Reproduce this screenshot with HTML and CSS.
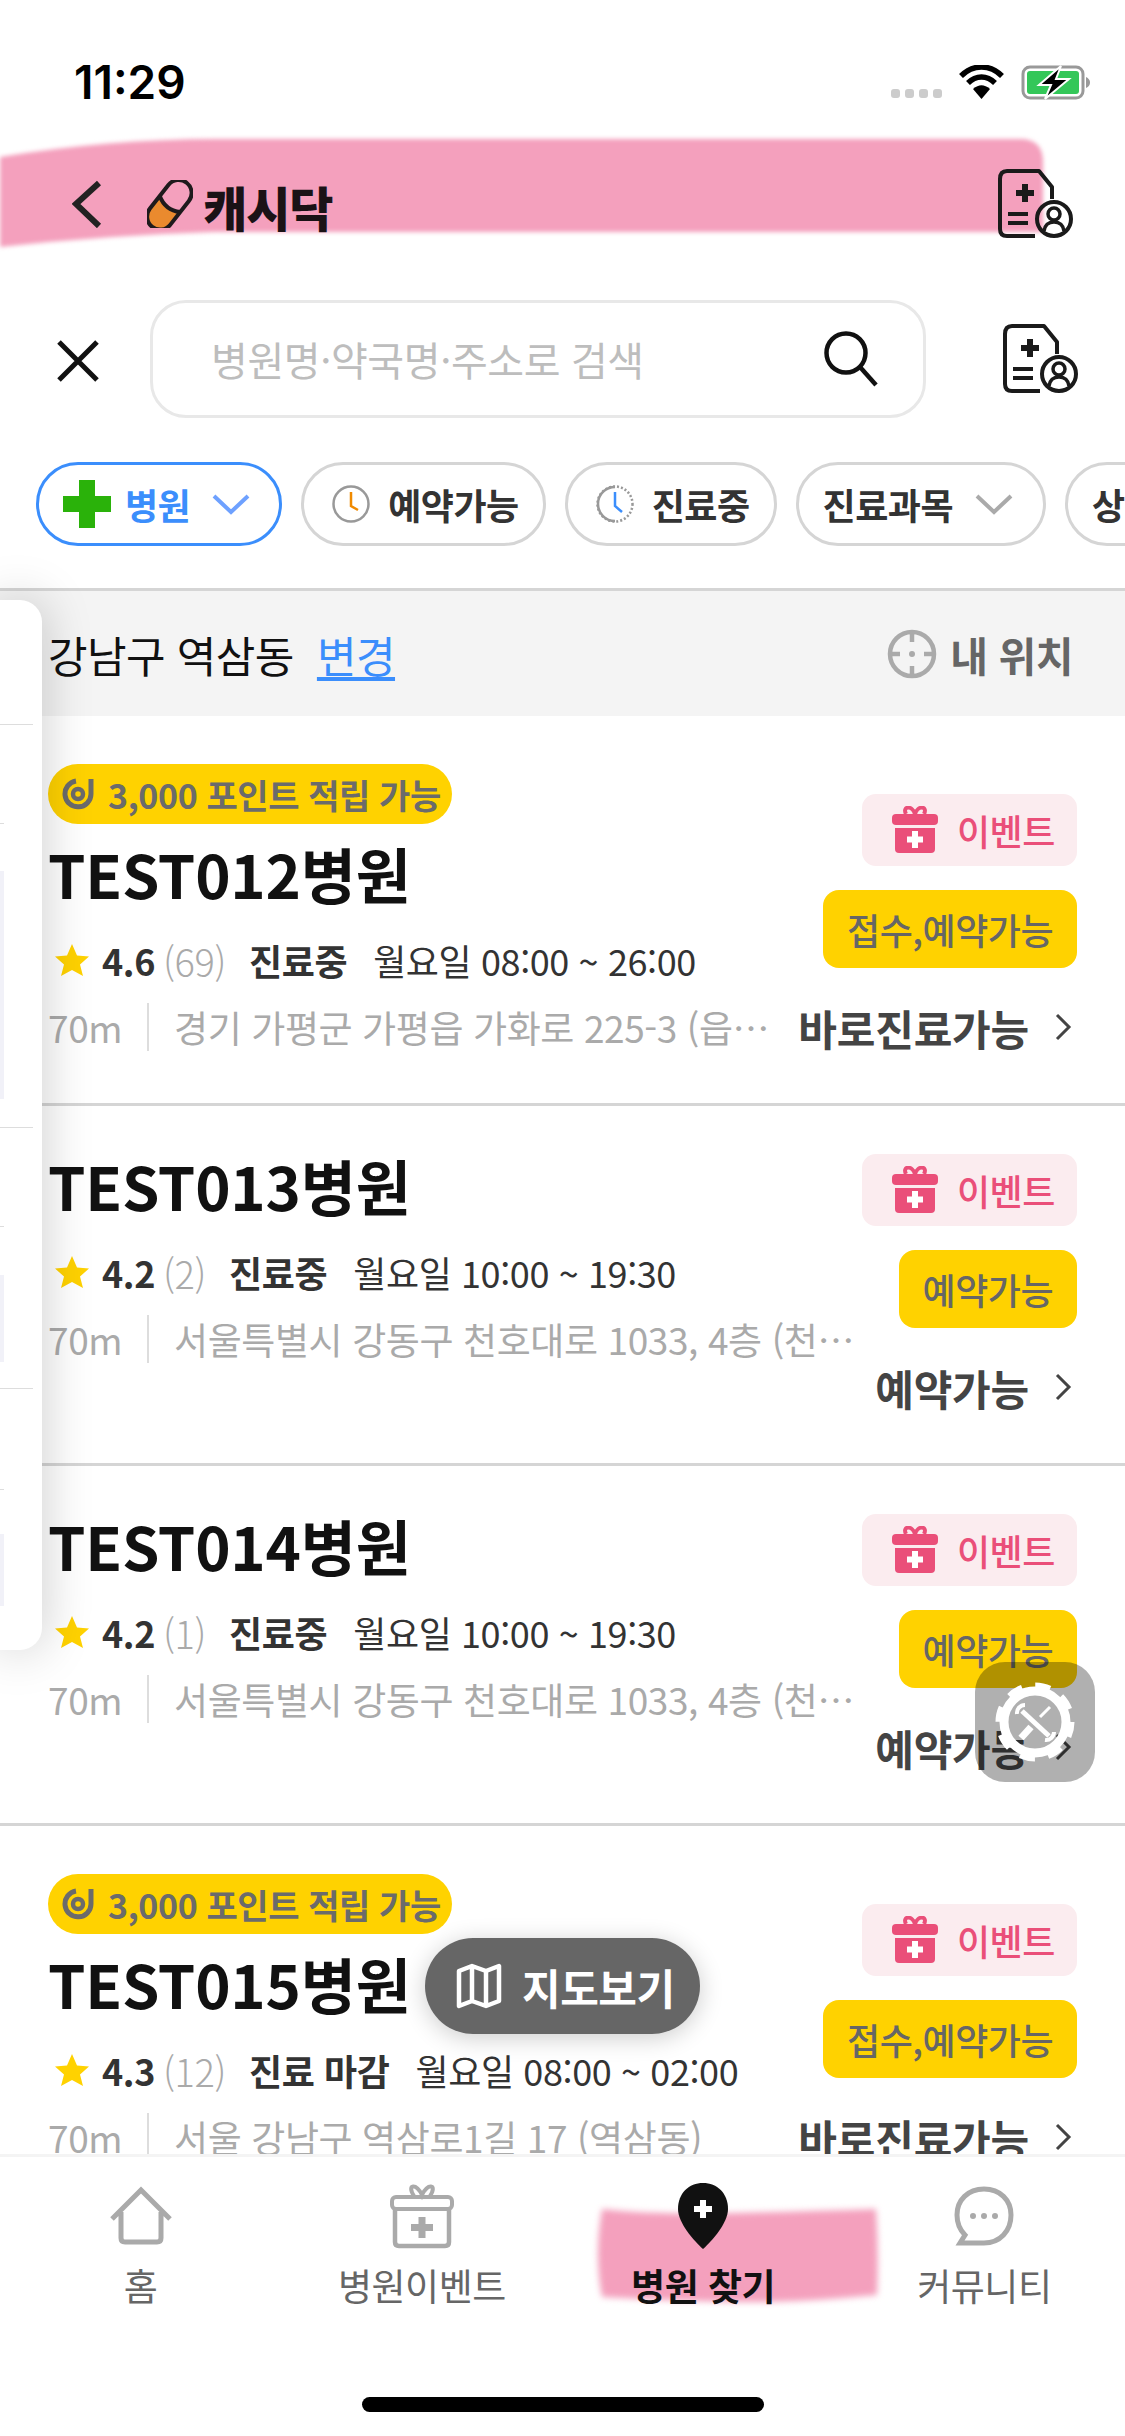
FILE: index.html
```html
<!DOCTYPE html>
<html lang="ko">
<head>
    <meta charset="utf-8">
    <title>병원 찾기</title>
    <link rel="stylesheet" href="styles.css">
</head>
<body>
<svg class="defs" width="0" height="0">
    <symbol id="doc" viewBox="0 0 76 70">
        <path d="M55 30V18L42 2H10Q3 2 3 10V60Q3 67 10 67H38" fill="none" stroke="#1a1a1a" stroke-width="4" stroke-linejoin="round"/>
        <path d="M28 15V33M19 24H37" stroke="#1a1a1a" stroke-width="6"/>
        <path d="M11 45H31M11 54H31" stroke="#1a1a1a" stroke-width="4"/>
        <circle cx="57" cy="50" r="17" fill="none" stroke="#1a1a1a" stroke-width="4"/>
        <circle cx="57" cy="45" r="6" fill="none" stroke="#1a1a1a" stroke-width="3.5"/>
        <path d="M47 62c1-7 5-9 10-9s9 2 10 9" fill="none" stroke="#1a1a1a" stroke-width="3.5"/>
    </symbol>
    <symbol id="gift" viewBox="0 0 46 48">
        <path d="M14 8C10 0 20-1 23 8C26-1 36 0 32 8" fill="none" stroke="#ea4f79" stroke-width="4"/>
        <rect x="0" y="8" width="46" height="11" rx="4" fill="#ea4f79"/>
        <path d="M3 22H43V43Q43 47 39 47H7Q3 47 3 43Z" fill="#ea4f79"/>
        <path d="M23 25V42M15 33.500H31" stroke="#fff" stroke-width="6"/>
    </symbol>
    <symbol id="coin" viewBox="0 0 34 32">
        <path d="M14 3A13 13 0 1 0 29 16V1" fill="none" stroke="#6b6b6b" stroke-width="5"/>
        <circle cx="16" cy="16" r="5" fill="none" stroke="#6b6b6b" stroke-width="4.500"/>
    </symbol>
    <symbol id="star" viewBox="0 0 34 32">
        <path d="M17 0L22 11.500L34 12.500L25 20.500L28 32L17 26L6 32L9 20.500L0 12.500L12 11.500Z" fill="#ffd200"/>
    </symbol>
    <symbol id="arrow" viewBox="0 0 18 30">
        <path d="M3 3L15 15L3 27" fill="none" stroke="#444" stroke-width="3"/>
    </symbol>
</svg>

<div class="phone">
    <!-- 상태바 -->
    <div class="status-bar">
        <span class="time">11:29</span>
        <div class="status-icons">
            <div class="signal"><i></i><i></i><i></i><i></i></div>
            <svg class="wifi" width="45" height="34" viewBox="0 0 45 34">
                <path d="M2 11C14-1 31-1 43 11M9 18C17 10 28 10 36 18" fill="none" stroke="#000" stroke-width="5.500"/>
                <path d="M14 24C20 19 25 19 31 24L22.500 34Z"/>
            </svg>
            <svg class="battery" width="70" height="35" viewBox="0 0 70 35">
                <rect x="2" y="2" width="60" height="31" rx="7" fill="none" stroke="#999" stroke-width="3"/>
                <rect x="6" y="6" width="52" height="23" rx="3" fill="#34c759"/>
                <path d="M65 12Q69 14 69 17.500T65 23Z" fill="#999"/>
                <path d="M40 1L18 20H30L24 34L48 14H35Z" stroke="#fff" stroke-width="2"/>
            </svg>
        </div>
    </div>

    <!-- 상단 헤더 -->
    <header class="top-bar">
        <svg class="smear-top" width="1045" height="112" viewBox="0 0 1045 112">
            <path d="M0 20Q110 2 215 2H1020Q1043 2 1043 25V95H215Q110 98 0 110Z" fill="#f4a0bd"/>
        </svg>
        <svg class="back" width="30" height="48" viewBox="0 0 30 48">
            <path d="M27 3L4 24L27 46" fill="none" stroke="#222" stroke-width="6"/>
        </svg>
        <svg class="pill" width="46" height="48" viewBox="0 0 46 48">
            <g transform="rotate(38 23 24)">
                <path d="M10 24V40A13 13 0 0 0 36 40V24Q23 32 10 24Z" fill="#ea8a2e"/>
                <rect x="10" y="-3" width="26" height="56" rx="13" fill="none" stroke="#1e1a1c" stroke-width="4"/>
                <path d="M10 24Q23 32 36 24" fill="none" stroke="#1e1a1c" stroke-width="4"/>
            </g>
        </svg>
        <span class="logo-text">캐시닥</span>
        <svg class="doc-icon" width="76" height="70"><use href="#doc"/></svg>
    </header>

    <!-- 검색 -->
    <div class="search-row">
        <svg class="close" width="44" height="42" viewBox="0 0 44 42">
            <path d="M3 2L41 40M41 2L3 40" stroke="#111" stroke-width="5"/>
        </svg>
        <div class="search-box">
            <span class="placeholder">병원명·약국명·주소로 검색</span>
            <svg width="56" height="56" viewBox="0 0 56 56">
                <circle cx="23" cy="22" r="19.500" fill="none" stroke="#111" stroke-width="4.500"/>
                <path d="M37 36L53 54" stroke="#111" stroke-width="4.500"/>
            </svg>
        </div>
        <svg class="doc-icon" width="76" height="72"><use href="#doc"/></svg>
    </div>

    <!-- 필터 -->
    <div class="chips">
        <div class="chip active">
            <svg width="48" height="48" viewBox="0 0 48 48"><path d="M16 0H32V16H48V32H32V48H16V32H0V16H16Z" fill="#2ab20a"/></svg>
            <span>병원</span>
            <svg class="chev" width="38" height="22" viewBox="0 0 38 22"><path d="M2 3L19 19L36 3" fill="none" stroke="#6ea1ff" stroke-width="4"/></svg>
        </div>
        <div class="chip">
            <svg width="38" height="38" viewBox="0 0 38 38">
                <circle cx="19" cy="19" r="17.500" fill="none" stroke="#999" stroke-width="2.500"/>
                <path d="M19 7V21L26 25" fill="none" stroke="#f08a00" stroke-width="2.500"/>
            </svg>
            <span>예약가능</span>
        </div>
        <div class="chip">
            <svg width="38" height="38" viewBox="0 0 38 38">
                <circle cx="19" cy="19" r="17.500" fill="none" stroke="#999" stroke-width="2.500" stroke-dasharray="2 2"/>
                <path d="M19 2A17 17 0 0 0 19 36" fill="none" stroke="#999" stroke-width="2.500"/>
                <path d="M19 7V21L26 27" fill="none" stroke="#3b8efc" stroke-width="2.500"/>
            </svg>
            <span>진료중</span>
        </div>
        <div class="chip chip-sel">
            <span>진료과목</span>
            <svg class="chev" width="38" height="22" viewBox="0 0 38 22"><path d="M2 3L19 19L36 3" fill="none" stroke="#aaa" stroke-width="4"/></svg>
        </div>
        <div class="chip chip-sel"><span>상세</span></div>
    </div>

    <!-- 위치 -->
    <div class="loc-bar">
        <span class="loc-name">강남구 역삼동</span>
        <a class="loc-change">변경</a>
        <svg class="loc-icon" width="50" height="50" viewBox="0 0 50 50">
            <circle cx="25" cy="25" r="22" fill="none" stroke="#aaa" stroke-width="4.500"/>
            <path d="M25 1V13M25 37V49M1 25H13M37 25H49" stroke="#aaa" stroke-width="4.500"/>
            <circle cx="25" cy="25" r="3" fill="#aaa"/>
        </svg>
        <span class="loc-mine">내 위치</span>
    </div>

    <!-- 병원 목록 -->
    <div class="list">
        <div class="card">
            <div class="card-main">
                <div class="point"><svg width="34" height="32"><use href="#coin"/></svg>3,000 포인트 적립 가능</div>
                <div class="name">TEST012병원</div>
                <div class="meta">
                    <svg width="34" height="32"><use href="#star"/></svg>
                    <b class="rate">4.6</b><span class="count">(69)</span>
                    <b class="state">진료중</b><span class="hours">월요일 08:00 ~ 26:00</span>
                </div>
                <div class="addr">
                    <span class="dist">70m</span>
                    <span class="addr-text">경기 가평군 가평읍 가화로 225-3 (읍내리 123번지)</span>
                </div>
            </div>
            <div class="card-side">
                <div class="event"><svg width="46" height="48"><use href="#gift"/></svg>이벤트</div>
                <div class="avail">접수,예약가능</div>
                <div class="go">바로진료가능<svg width="18" height="30"><use href="#arrow"/></svg></div>
            </div>
        </div>

        <div class="card">
            <div class="card-main">
                <div class="name">TEST013병원</div>
                <div class="meta">
                    <svg width="34" height="32"><use href="#star"/></svg>
                    <b class="rate">4.2</b><span class="count">(2)</span>
                    <b class="state">진료중</b><span class="hours">월요일 10:00 ~ 19:30</span>
                </div>
                <div class="addr">
                    <span class="dist">70m</span>
                    <span class="addr-text">서울특별시 강동구 천호대로 1033, 4층 (천호동 123번지)</span>
                </div>
            </div>
            <div class="card-side">
                <div class="event"><svg width="46" height="48"><use href="#gift"/></svg>이벤트</div>
                <div class="avail">예약가능</div>
                <div class="go">예약가능<svg width="18" height="30"><use href="#arrow"/></svg></div>
            </div>
        </div>

        <div class="card">
            <div class="card-main">
                <div class="name">TEST014병원</div>
                <div class="meta">
                    <svg width="34" height="32"><use href="#star"/></svg>
                    <b class="rate">4.2</b><span class="count">(1)</span>
                    <b class="state">진료중</b><span class="hours">월요일 10:00 ~ 19:30</span>
                </div>
                <div class="addr">
                    <span class="dist">70m</span>
                    <span class="addr-text">서울특별시 강동구 천호대로 1033, 4층 (천호동 123번지)</span>
                </div>
            </div>
            <div class="card-side">
                <div class="event"><svg width="46" height="48"><use href="#gift"/></svg>이벤트</div>
                <div class="avail">예약가능</div>
                <div class="go">예약가능<svg width="18" height="30"><use href="#arrow"/></svg></div>
            </div>
        </div>

        <div class="card">
            <div class="card-main">
                <div class="point"><svg width="34" height="32"><use href="#coin"/></svg>3,000 포인트 적립 가능</div>
                <div class="name">TEST015병원</div>
                <div class="meta">
                    <svg width="34" height="32"><use href="#star"/></svg>
                    <b class="rate">4.3</b><span class="count">(12)</span>
                    <b class="state">진료 마감</b><span class="hours">월요일 08:00 ~ 02:00</span>
                </div>
                <div class="addr">
                    <span class="dist">70m</span>
                    <span class="addr-text">서울 강남구 역삼로1길 17 (역삼동)</span>
                </div>
            </div>
            <div class="card-side">
                <div class="event"><svg width="46" height="48"><use href="#gift"/></svg>이벤트</div>
                <div class="avail">접수,예약가능</div>
                <div class="go">바로진료가능<svg width="18" height="30"><use href="#arrow"/></svg></div>
            </div>
        </div>
    </div>

    <!-- 하단 탭 -->
    <nav class="tab-bar">
        <svg class="smear-tab" width="286" height="100" viewBox="0 0 286 100">
            <path d="M8 4Q60 10 140 8T282 4Q285 50 283 90Q200 98 140 97T8 92Q0 50 8 4Z" fill="#f4a0bd"/>
        </svg>
        <div class="tab">
            <svg width="62" height="58" viewBox="0 0 62 58">
                <path d="M2 32L31 3L60 32M11 25V51Q11 55 15 55H47Q51 55 51 51V25" fill="none" stroke="#aaa" stroke-width="5"/>
            </svg>
            <span>홈</span>
        </div>
        <div class="tab">
            <svg width="64" height="64" viewBox="0 0 64 64">
                <path d="M24 12C16 0 27-1 32 11C37-1 48 0 40 12" fill="none" stroke="#aaa" stroke-width="4"/>
                <rect x="2" y="13" width="60" height="12" rx="4" fill="none" stroke="#aaa" stroke-width="4"/>
                <path d="M5 25V58Q5 62 9 62H55Q59 62 59 58V25" fill="none" stroke="#aaa" stroke-width="4.500"/>
                <path d="M32 33V54M21 43.500H43" stroke="#aaa" stroke-width="7"/>
            </svg>
            <span>병원이벤트</span>
        </div>
        <div class="tab tab-on">
            <svg width="50" height="66" viewBox="0 0 50 66">
                <path d="M25 0C39 0 50 10 50 26C50 40 34 58 25 66C16 58 0 40 0 26C0 10 11 0 25 0Z" fill="#111"/>
                <path d="M25 17V35M16 26H34" stroke="#fff" stroke-width="6"/>
            </svg>
            <span>병원 찾기</span>
        </div>
        <div class="tab">
            <svg width="60" height="60" viewBox="0 0 60 60">
                <path d="M30 3C46 3 57 14 57 29C57 45 46 57 30 57H6L11 49C6 44 3 37 3 29C3 14 14 3 30 3Z" fill="none" stroke="#aaa" stroke-width="5"/>
                <circle cx="19" cy="30" r="3" fill="#aaa"/><circle cx="30" cy="30" r="3" fill="#aaa"/><circle cx="41" cy="30" r="3" fill="#aaa"/>
            </svg>
            <span>커뮤니티</span>
        </div>
        <div class="home-bar"></div>
    </nav>

    <!-- 떠 있는 요소 -->
    <div class="side-panel">
        <div class="side-line long l1"></div>
        <div class="side-line l2"></div>
        <div class="side-block b1"></div>
        <div class="side-line long l3"></div>
        <div class="side-line l2"></div>
        <div class="side-block b2"></div>
        <div class="side-line long l4"></div>
        <div class="side-line l5"></div>
        <div class="side-block b3"></div>
    </div>

    <div class="map-btn">
        <svg width="46" height="46" viewBox="0 0 46 46">
            <path d="M3 8L16 3L30 8L43 3V38L30 43L16 38L3 43ZM16 3V38M30 8V43" fill="none" stroke="#fff" stroke-width="4.500" stroke-linejoin="round"/>
        </svg>
        지도보기
    </div>

    <div class="dev-btn">
        <svg width="84" height="84" viewBox="0 0 84 84">
            <circle cx="42" cy="42" r="36" fill="none" stroke="#fff" stroke-width="7" stroke-dasharray="15 13.270"/>
            <circle cx="42" cy="42" r="31" fill="none" stroke="#fff" stroke-width="9"/>
            <path d="M57 27L47 37" stroke="#fff" stroke-width="3" fill="none"/>
            <path d="M38 47L28 58" stroke="#fff" stroke-width="7" fill="none"/>
            <path d="M29 31L56 56" stroke="#fff" stroke-width="5" fill="none"/>
            <path d="M32 25A8 8 0 0 0 24 34M52 60A8 8 0 0 0 61 52" stroke="#fff" stroke-width="4" fill="none"/>
        </svg>
    </div>
</div>
</body>
</html>
```

FILE: styles.css
```css
* {
    box-sizing: border-box;
}
body {
    margin: 0;
    background: #fff;
    font-family: "Noto Sans CJK KR", "Noto Sans", sans-serif;
    color: #111;
}
svg {
    display: block;
    flex-shrink: 0;
}
.defs {
    position: absolute;
}
.phone {
    position: relative;
    width: 1125px;
    height: 2436px;
    overflow: hidden;
    display: flex;
    flex-direction: column;
    background: #fff;
}

/* status bar */
.status-bar {
    height: 137px;
    padding: 52px 34px 0 74px;
    display: flex;
    justify-content: space-between;
    align-items: flex-start;
}
.time {
    font-family: Inter, sans-serif;
    font-weight: 600;
    font-size: 46px;
    line-height: 60px;
    color: #000;
}
.status-icons {
    display: flex;
    align-items: flex-start;
    gap: 17px;
    padding-top: 13px;
}
.signal {
    display: flex;
    gap: 5px;
    padding-top: 24px;
}
.signal i {
    width: 9px;
    height: 9px;
    border-radius: 3px;
    background: #ccc;
}

/* header */
.top-bar {
    position: relative;
    height: 134px;
    padding: 0 52px 0 72px;
    display: flex;
    align-items: center;
    gap: 44px;
}
.smear-top {
    position: absolute;
    left: 0;
    top: 0;
    filter: blur(2px);
}
.top-bar svg:not(.smear-top), .logo-text {
    position: relative;
}
.pill {
    margin-left: 1px;
}
.logo-text {
    margin-left: -34px;
    padding-top: 3px;
    font-size: 48px;
    font-weight: 900;
    line-height: 60px;
    letter-spacing: -1px;
    color: #1a1216;
}
.top-bar .doc-icon {
    margin-left: auto;
}

/* search */
.search-row {
    height: 147px;
    padding: 29px 47px 0 56px;
    display: flex;
    align-items: flex-start;
}
.close {
    margin-top: 40px;
}
.search-box {
    width: 776px;
    height: 118px;
    margin-left: 50px;
    padding: 0 44px 0 58px;
    border: 3px solid #e8e8e8;
    border-radius: 36px;
    display: flex;
    align-items: center;
    justify-content: space-between;
}
.placeholder {
    font-size: 40px;
    letter-spacing: -.4px;
    color: #bdbdbd;
}
.search-row .doc-icon {
    margin: 23px 0 0 auto;
}

/* filter chips */
.chips {
    height: 170px;
    padding: 44px 0 0 36px;
    display: flex;
    gap: 19px;
    overflow: hidden;
    align-items: flex-start;
}
.chip {
    height: 84px;
    padding: 0 24px 0 28px;
    border: 3px solid #d5d5d5;
    border-radius: 42px;
    display: flex;
    align-items: center;
    gap: 18px;
    flex-shrink: 0;
    font-size: 36px;
    font-weight: 700;
    letter-spacing: -.5px;
    color: #333;
    background: #fff;
}
.chip.active {
    border-color: #3b8efc;
    color: #3b8efc;
    padding: 0 29px 0 24px;
    gap: 14px;
}
.chip.active .chev {
    margin-left: 8px;
}
.chip-sel {
    padding: 0 30px 0 24px;
}
.chip-sel .chev {
    margin-left: 4px;
}

/* location */
.loc-bar {
    height: 128px;
    padding: 0 52px 0 48px;
    border-top: 3px solid #d5d5d5;
    background: #f4f4f4;
    display: flex;
    align-items: center;
    font-size: 43px;
    letter-spacing: -.5px;
}
.loc-change {
    margin-left: 23px;
    color: #3b8efc;
    text-decoration: underline;
    text-underline-offset: 4px;
}
.loc-icon {
    margin-left: auto;
}
.loc-mine {
    margin-left: 13px;
    font-size: 41px;
    font-weight: 700;
    color: #666;
}

/* list */
.list {
    height: 1438px;
    overflow: hidden;
}
.card {
    display: flex;
    padding: 48px 48px 48px 48px;
    border-bottom: 3px solid #d5d5d5;
}
.card-main {
    flex: 1;
    min-width: 0;
    margin-right: -4px;
}
.point {
    width: 404px;
    height: 60px;
    margin-bottom: 18px;
    padding-left: 14px;
    border-radius: 30px;
    background: #ffd200;
    display: flex;
    align-items: center;
    gap: 12px;
    font-size: 34px;
    font-weight: 700;
    letter-spacing: -.4px;
    white-space: nowrap;
    color: #6b6b6b;
}
.name {
    margin-top: -3px;
    font-size: 60px;
    font-weight: 700;
    line-height: 68px;
    letter-spacing: -.2px;
    color: #111;
}
.meta {
    height: 48px;
    margin-top: 29px;
    padding-left: 7px;
    display: flex;
    align-items: center;
    font-size: 36px;
    letter-spacing: -.4px;
    white-space: nowrap;
    color: #333;
}
.rate {
    margin-left: 13px;
}
.count {
    margin-left: 8px;
    font-size: 38px;
    font-weight: 300;
    color: #aaa;
}
.state {
    margin-left: 23px;
}
.hours {
    margin-left: 26px;
}
.addr {
    height: 50px;
    margin: 18px 0 3px;
    display: flex;
    align-items: center;
    font-size: 37px;
    letter-spacing: -.4px;
    white-space: nowrap;
    color: #aaa;
}
.dist {
    width: 101px;
    height: 48px;
    line-height: 48px;
    border-right: 2px solid #ddd;
    flex-shrink: 0;
}
.addr-text {
    margin-left: 25px;
    overflow: hidden;
    text-overflow: ellipsis;
}
.card-side {
    align-self: flex-end;
    display: flex;
    flex-direction: column;
    align-items: flex-end;
    flex-shrink: 0;
}
.event {
    width: 215px;
    height: 72px;
    padding-left: 30px;
    border-radius: 14px;
    background: #fbecef;
    display: flex;
    align-items: center;
    gap: 19px;
    font-size: 36px;
    font-weight: 500;
    letter-spacing: -.5px;
    color: #ea4f79;
}
.avail {
    height: 78px;
    margin-top: 24px;
    padding: 0 24px;
    border-radius: 16px;
    background: #ffd200;
    display: flex;
    align-items: center;
    font-size: 36px;
    font-weight: 500;
    letter-spacing: -.5px;
    color: #666;
}
.go {
    height: 56px;
    margin-top: 31px;
    display: flex;
    align-items: center;
    gap: 25px;
    padding-right: 5px;
    font-size: 42px;
    font-weight: 700;
    letter-spacing: -.2px;
    white-space: nowrap;
    color: #444;
}

/* tabs */
.tab-bar {
    position: relative;
    flex: 1;
    border-top: 3px solid #f4f4f4;
    background: #fff;
    display: grid;
    grid-template-columns: repeat(4, 1fr);
    align-content: start;
}
.smear-tab {
    position: absolute;
    left: 594px;
    top: 48px;
    filter: blur(3px);
}
.tab {
    position: relative;
    height: 165px;
    padding-top: 26px;
    display: flex;
    flex-direction: column;
    align-items: center;
    font-size: 37px;
    letter-spacing: -.5px;
    color: #666;
}
.tab svg {
    height: 66px;
}
.tab span {
    position: absolute;
    top: 101px;
    white-space: nowrap;
}
.tab-on {
    font-weight: 700;
    color: #111;
}
.home-bar {
    position: absolute;
    left: 362px;
    bottom: 24px;
    width: 402px;
    height: 15px;
    border-radius: 8px;
    background: #000;
}

/* floating */
.side-panel {
    position: absolute;
    left: 0;
    top: 600px;
    width: 42px;
    height: 1050px;
    border-radius: 0 22px 22px 0;
    background: #fff;
    box-shadow: 0 0 50px rgba(0,0,0,.22);
}
.side-line {
    width: 4px;
    height: 1px;
    margin-top: 98px;
    background: #ddd;
}
.side-line.long {
    width: 33px;
}
.l1 { margin-top: 124px; }
.l3 { margin-top: 28px; }
.l4 { margin-top: 26px; }
.l5 { margin-top: 100px; }
.side-block {
    width: 4px;
    background: #f1f1f8;
}
.b1 { height: 228px; margin-top: 47px; }
.b2 { height: 87px; margin-top: 48px; }
.b3 { height: 72px; margin-top: 44px; }
.map-btn {
    position: absolute;
    left: 425px;
    top: 1938px;
    width: 275px;
    height: 96px;
    padding-left: 31px;
    border-radius: 48px;
    background: #666;
    box-shadow: 0 4px 24px rgba(0,0,0,.2);
    display: flex;
    align-items: center;
    gap: 20px;
    font-size: 42px;
    font-weight: 700;
    letter-spacing: -.5px;
    color: #fff;
}
.dev-btn {
    position: absolute;
    left: 975px;
    top: 1662px;
    width: 120px;
    height: 120px;
    border-radius: 30px;
    background: rgba(0,0,0,.31);
    display: flex;
    align-items: center;
    justify-content: center;
}
```
